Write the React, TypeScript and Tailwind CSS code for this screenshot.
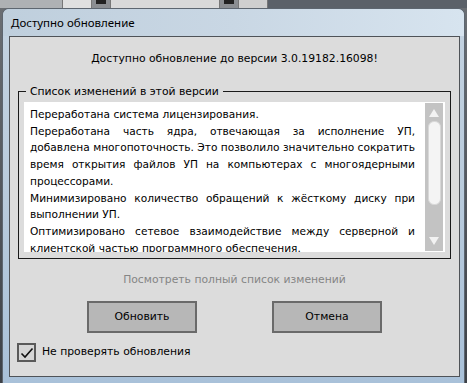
const lines: { text: string; last?: boolean }[] = [
  { text: "Переработана система лицензирования.", last: true },
  { text: "Переработана часть ядра, отвечающая за исполнение УП," },
  { text: "добавлена многопоточность. Это позволило значительно сократить" },
  { text: "время открытия файлов УП на компьютерах с многоядерными" },
  { text: "процессорами.", last: true },
  { text: "Минимизировано количество обращений к жёсткому диску при" },
  { text: "выполнении УП.", last: true },
  { text: "Оптимизировано сетевое взаимодействие между серверной и" },
  { text: "клиентской частью программного обеспечения.", last: true },
];

function Scrollbar() {
  return (
    <div className="w-[18px] h-full bg-[#c3c3c3] flex flex-col items-center py-[3px]">
      <svg width="12" height="10" viewBox="0 0 12 10" className="mt-[2px]">
        <path d="M6 1 L11 9 L1 9 Z" fill="#f2f2f2" />
      </svg>
      <div className="mt-[3px] w-[13px] h-[84px] rounded-[6px] bg-[#f4f4f4] border border-[#d8d8d8]" />
      <div className="flex-1" />
      <svg width="12" height="10" viewBox="0 0 12 10" className="mb-[2px]">
        <path d="M1 1 L11 1 L6 9 Z" fill="#f2f2f2" />
      </svg>
    </div>
  );
}

export default function App() {
  return (
    <div className="w-[467px] h-[383px] overflow-hidden bg-gradient-to-b from-[#6b6f74] to-[#3d4147] font-['DejaVu_Sans',sans-serif]">
      {/* app behind the dialog */}
      <div className="h-[8px] flex bg-[#8b8e92]">
        <div className="w-[62px] bg-[#aeb1b4]" />
        <div className="w-[30px] bg-[#e0e0e0] border-x border-[#777]" />
        <div className="w-[10px] bg-[#222] mx-[4px] h-[4px]" />
        <div className="w-[110px] bg-[#d9d9d9] border-x border-[#777]" />
        <div className="w-[10px] bg-[#222] mx-[4px] h-[4px]" />
        <div className="w-[30px] bg-[#cfcfcf] border-x border-[#777]" />
        <div className="flex-1 bg-[#5b6169]" />
      </div>

      {/* window frame */}
      <div className="ml-[2px] w-[463px] h-[375px] rounded-t-[7px] border border-[#5d6670] border-b-0 bg-gradient-to-b from-[#c4d3e1] via-[#b9cbdc] to-[#a9c1d9] flex flex-col">
        <div className="h-[27px] flex items-center pl-[8px] text-[11.5px] text-black font-['Noto_Sans',sans-serif] bg-gradient-to-r from-[#bfcfdd] via-[#c9d7e4] to-[#d7e4ef] rounded-t-[6px]">
          Доступно обновление
        </div>

        {/* client area */}
        <div className="ml-[6px] w-[451px] h-[341px] border border-[#4f5358] bg-[#dcdcdc] flex flex-col text-[10.8px] text-black">
          <div className="h-[44px] flex items-center justify-center pt-[1px]">
            Доступно обновление до версии 3.0.19182.16098!
          </div>

          {/* group box */}
          <div className="relative mx-[8px] mt-[10px] h-[168px] border border-[#1a1a1a] px-[5px] pt-[10px] pb-[6px]">
            <div className="absolute left-[7px] -top-[8px] px-[4px] bg-[#dcdcdc] leading-[15px]">
              Список изменений в этой версии
            </div>
            <div className="h-full bg-white flex">
              <div className="flex-1 pl-[6px] pr-[10px] pt-[4px] overflow-hidden leading-[16.7px] text-[10.6px]">
                {lines.map((l, i) => (
                  <div
                    key={i}
                    className={
                      l.last
                        ? "whitespace-nowrap"
                        : "whitespace-nowrap text-justify [text-align-last:justify]"
                    }
                  >
                    {l.text}
                  </div>
                ))}
              </div>
              <div className="py-[1px] pr-[2px]">
                <Scrollbar />
              </div>
            </div>
          </div>

          <div className="mt-[13px] text-center text-[#858585] leading-[16px]">
            Посмотреть полный список изменений
          </div>

          <div className="mt-[13px] flex justify-center gap-[75px]">
            <button className="w-[110px] h-[32px] border-2 border-[#6a6a6a] bg-[#b7b7b7] text-[10.8px]">
              Обновить
            </button>
            <button className="w-[110px] h-[32px] border-2 border-[#6a6a6a] bg-[#b7b7b7] text-[10.8px]">
              Отмена
            </button>
          </div>

          <div className="mt-[10px] ml-[7px] flex items-center gap-[6px]">
            <div className="w-[19px] h-[19px] border-2 border-[#5a5a5a] bg-[#d6d6d6] flex items-center justify-center">
              <svg width="14" height="12" viewBox="0 0 14 12">
                <path d="M1.5 6.5 L5 10 L12.5 1.5" fill="none" stroke="#111" strokeWidth="1.6" />
              </svg>
            </div>
            <span>Не проверять обновления</span>
          </div>
        </div>
      </div>
    </div>
  );
}
